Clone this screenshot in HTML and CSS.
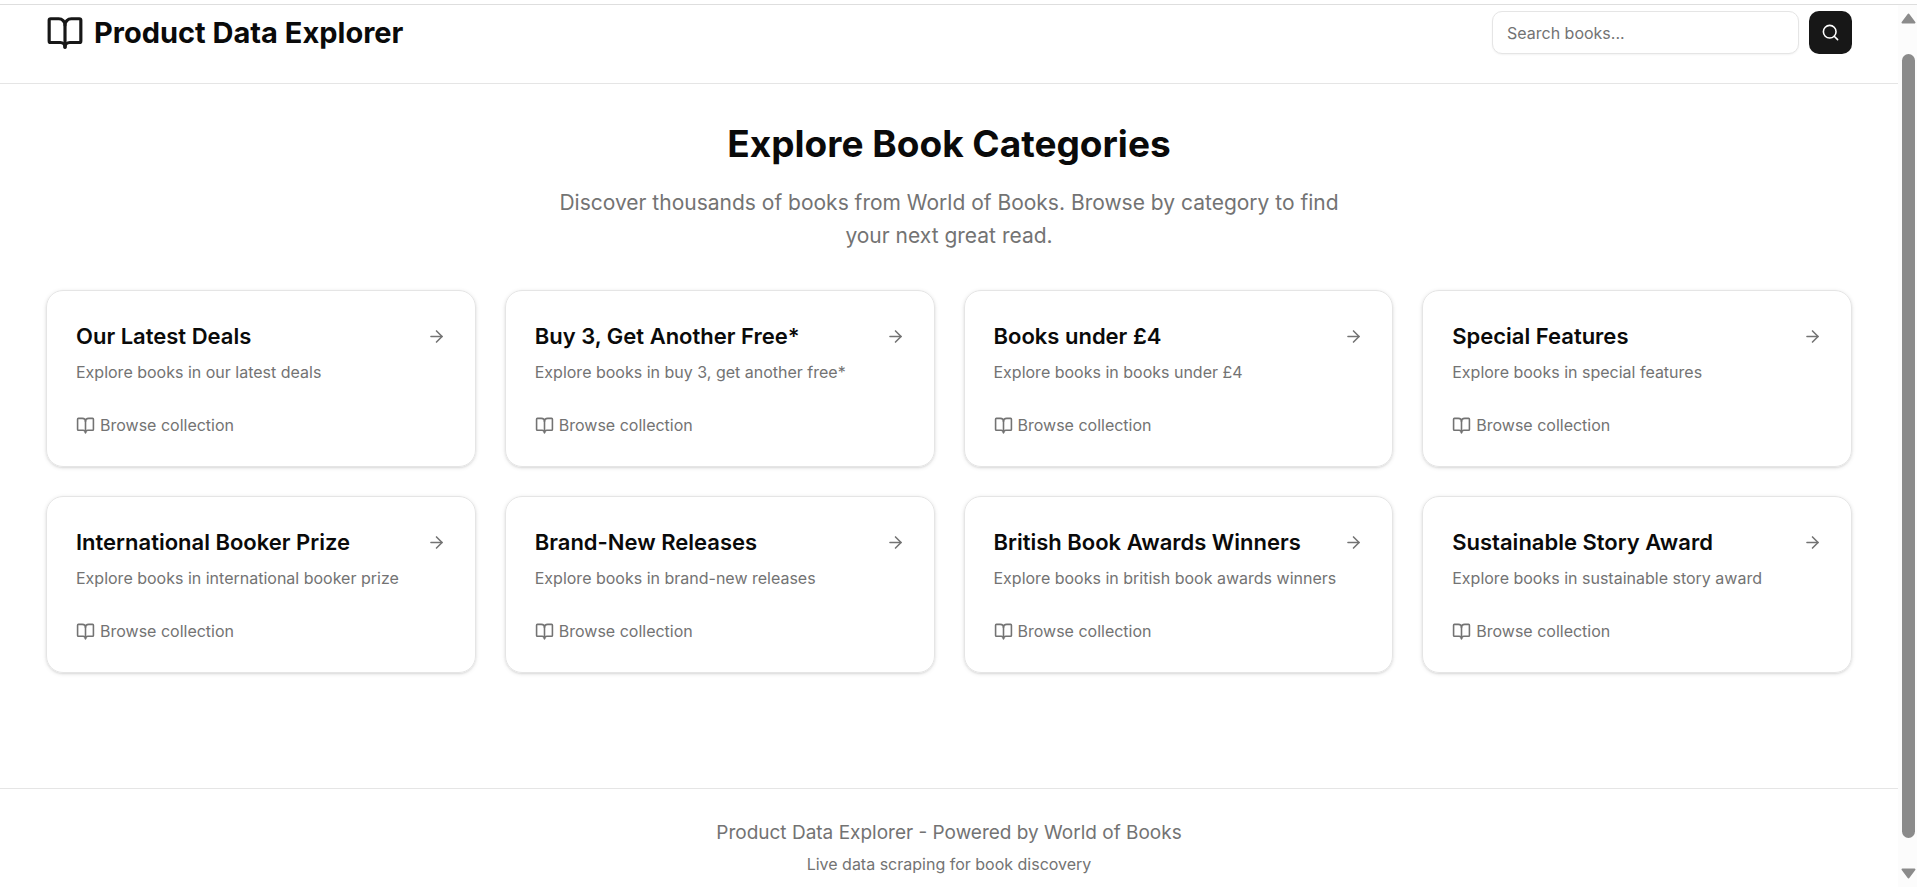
FILE: index.html
```html
<!DOCTYPE html>
<html lang="en">
<head>
<meta charset="utf-8">
<title>Product Data Explorer</title>
<link rel="stylesheet" href="styles.css">
</head>
<body>
<svg class="sprite" aria-hidden="true">
  <symbol id="book" viewBox="0 0 24 24"><path d="M12 7v14"/><path d="M3 18a1 1 0 0 1-1-1V4a1 1 0 0 1 1-1h5a4 4 0 0 1 4 4 4 4 0 0 1 4-4h5a1 1 0 0 1 1 1v13a1 1 0 0 1-1 1h-6a3 3 0 0 0-3 3 3 3 0 0 0-3-3z"/></symbol>
  <symbol id="arrow" viewBox="0 0 24 24"><path d="M5 12h14"/><path d="m12 5 7 7-7 7"/></symbol>
  <symbol id="search" viewBox="0 0 24 24"><circle cx="11" cy="11" r="8"/><path d="m21 21-4.3-4.3"/></symbol>
</svg>
<div class="viewport">
  <div class="page">
    <header class="site-header">
      <div class="container header-row">
        <div class="brand"><svg class="icon brand-icon"><use href="#book"/></svg><h1 class="brand-name">Product Data Explorer</h1></div>
        <form class="search">
          <input class="search-input" type="search" placeholder="Search books..." aria-label="Search books">
          <button class="search-button" type="button" aria-label="Search"><svg class="icon"><use href="#search"/></svg></button>
        </form>
      </div>
    </header>
    <main class="container main">
      <section class="intro">
        <h2 class="intro-title">Explore Book Categories</h2>
        <p class="intro-text">Discover thousands of books from World of Books. Browse by category to find your next great read.</p>
      </section>
      <section class="grid">
        <a class="card" href="#"><h3 class="card-title">Our Latest Deals<svg class="icon"><use href="#arrow"/></svg></h3><p class="card-text">Explore books in our latest deals</p><p class="card-more"><svg class="icon"><use href="#book"/></svg>Browse collection</p></a>
        <a class="card" href="#"><h3 class="card-title">Buy 3, Get Another Free*<svg class="icon"><use href="#arrow"/></svg></h3><p class="card-text">Explore books in buy 3, get another free*</p><p class="card-more"><svg class="icon"><use href="#book"/></svg>Browse collection</p></a>
        <a class="card" href="#"><h3 class="card-title">Books under £4<svg class="icon"><use href="#arrow"/></svg></h3><p class="card-text">Explore books in books under £4</p><p class="card-more"><svg class="icon"><use href="#book"/></svg>Browse collection</p></a>
        <a class="card" href="#"><h3 class="card-title">Special Features<svg class="icon"><use href="#arrow"/></svg></h3><p class="card-text">Explore books in special features</p><p class="card-more"><svg class="icon"><use href="#book"/></svg>Browse collection</p></a>
        <a class="card" href="#"><h3 class="card-title">International Booker Prize<svg class="icon"><use href="#arrow"/></svg></h3><p class="card-text">Explore books in international booker prize</p><p class="card-more"><svg class="icon"><use href="#book"/></svg>Browse collection</p></a>
        <a class="card" href="#"><h3 class="card-title">Brand-New Releases<svg class="icon"><use href="#arrow"/></svg></h3><p class="card-text">Explore books in brand-new releases</p><p class="card-more"><svg class="icon"><use href="#book"/></svg>Browse collection</p></a>
        <a class="card" href="#"><h3 class="card-title">British Book Awards Winners<svg class="icon"><use href="#arrow"/></svg></h3><p class="card-text">Explore books in british book awards winners</p><p class="card-more"><svg class="icon"><use href="#book"/></svg>Browse collection</p></a>
        <a class="card" href="#"><h3 class="card-title">Sustainable Story Award<svg class="icon"><use href="#arrow"/></svg></h3><p class="card-text">Explore books in sustainable story award</p><p class="card-more"><svg class="icon"><use href="#book"/></svg>Browse collection</p></a>
      </section>
    </main>
    <footer class="site-footer">
      <p class="footer-main">Product Data Explorer - Powered by World of Books</p>
      <p class="footer-sub">Live data scraping for book discovery</p>
    </footer>
  </div>
  <div class="scrollbar" aria-hidden="true">
    <svg class="scroll-arrow" viewBox="0 0 15 11"><path d="M7.500 1.500 13.500 9.500H1.500z"/></svg>
    <div class="thumb"></div>
    <svg class="scroll-arrow" viewBox="0 0 15 11"><path d="M7.500 9.500 13.500 1.500H1.500z"/></svg>
  </div>
</div>
</body>
</html>
```
FILE: styles.css
```css
* { box-sizing: border-box; }
body {
  margin: 0;
  height: 100vh;
  overflow: hidden;
  padding-top: 4px;
  background: #fff;
  color: #0a0a0a;
  font-family: Inter, "Liberation Sans", sans-serif;
}
h1, h2, h3, p { margin: 0; }
.sprite { display: none; }
.icon {
  flex: none;
  width: 19px;
  height: 19px;
  fill: none;
  stroke: currentColor;
  stroke-width: 2;
  stroke-linecap: round;
  stroke-linejoin: round;
}
.viewport {
  display: flex;
  height: 100%;
  border-top: 1px solid #dedede;
}
.page { flex: 1; min-width: 0; overflow: hidden; }
.container { max-width: 1844px; margin: 0 auto; padding: 0 19px; }

.site-header { padding: 6px 0 29px; border-bottom: 1px solid #e5e5e5; }
.header-row { display: flex; align-items: center; justify-content: space-between; }
.brand { display: flex; align-items: center; gap: 10px; }
.brand-icon { width: 38px; height: 38px; color: #171717; }
.brand-name { font-size: 29px; line-height: 38px; font-weight: 700; }
.search { display: flex; gap: 10px; }
.search-input {
  width: 307px;
  height: 43px;
  padding: 0 14px;
  border: 1px solid #e5e5e5;
  border-radius: 10px;
  background: #fff;
  box-shadow: 0 1px 2px rgba(0, 0, 0, 0.05);
  font: inherit;
  font-size: 16px;
}
.search-input::placeholder { color: #737373; opacity: 1; }
.search-button {
  display: flex;
  align-items: center;
  justify-content: center;
  width: 43px;
  height: 43px;
  padding: 0;
  border: 0;
  border-radius: 10px;
  background: #171717;
  color: #fff;
}

.main { padding-top: 38px; padding-bottom: 38px; }
.intro { margin-bottom: 38px; text-align: center; }
.intro-title { margin-bottom: 21px; font-size: 37px; line-height: 43px; font-weight: 700; }
.intro-text { max-width: 806px; margin: 0 auto; font-size: 21px; line-height: 33px; color: #737373; }

.grid { display: grid; grid-template-columns: repeat(4, 1fr); gap: 29px; }
.card {
  padding: 29px;
  border: 1px solid #e5e5e5;
  border-radius: 17px;
  box-shadow: 0 1px 4px rgba(0, 0, 0, 0.1), 0 1px 2px rgba(0, 0, 0, 0.08);
  color: inherit;
  text-decoration: none;
}
.card-title {
  display: flex;
  align-items: center;
  justify-content: space-between;
  margin-bottom: 7px;
  font-size: 22px;
  line-height: 33px;
  font-weight: 600;
}
.card-title .icon { color: #737373; }
.card-text { margin-bottom: 29px; font-size: 16px; line-height: 24px; color: #737373; }
.card-more { display: flex; align-items: center; gap: 5px; font-size: 16px; line-height: 24px; color: #737373; }

.site-footer {
  margin-top: 77px;
  padding: 29px 19px;
  border-top: 1px solid #e5e5e5;
  text-align: center;
  color: #737373;
}
.footer-main { margin-bottom: 5px; font-size: 19px; line-height: 29px; }
.footer-sub { font-size: 16px; line-height: 24px; }

.scrollbar {
  display: flex;
  flex-direction: column;
  align-items: center;
  gap: 30px;
  width: 19px;
  padding: 8px 0 8px 2px;
  background: #fcfcfc;
}
.scroll-arrow { flex: none; width: 15px; height: 11px; fill: #8b8b8b; stroke: #8b8b8b; stroke-width: 2; stroke-linejoin: round; }
.thumb { flex: 1; width: 13px; border-radius: 7px; background: #8b8b8b; }
```
